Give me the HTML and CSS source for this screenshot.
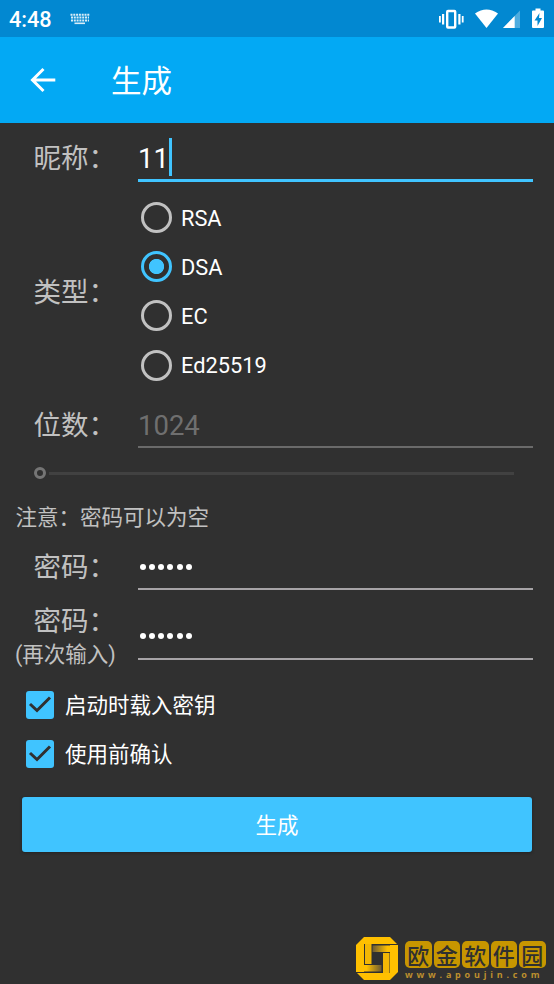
FILE: index.html
```html
<!DOCTYPE html>
<html lang="zh-CN">
<head>
<meta charset="utf-8">
<title>生成</title>
<link rel="stylesheet" href="styles.css">
</head>
<body>
<header class="status">
  <span class="clock">4:48</span>
  <svg class="keyboard" width="20" height="12" viewBox="0 0 20 12">
    <path d="M.5 1.800h19M1 4.600h18M1 7.400h18" stroke="#d9edf8" stroke-width="2" stroke-dasharray="2 .8" fill="none"/>
    <path d="M4.500 10.300h10.500" stroke="#d9edf8" stroke-width="1.600"/>
  </svg>
  <svg class="system" width="110" height="24" viewBox="0 0 110 24" fill="#fff">
    <rect x="10.200" y="4" width="8" height="16.500" rx=".8" fill="none" stroke="#fff" stroke-width="2.400"/>
    <path d="M2 9h1.800v6.500H2zM5 7h2.200v10.500H5zM21.300 7h2.200v10.500h-2.200zM24.800 9h1.800v6.500h-1.800z"/>
    <path d="M38 6.500Q49.500-1.500 61 6.500L49.500 21z"/>
    <path d="M66 21L83 3.500V21z" opacity=".3"/><path d="M66 21L77.700 9v12z"/>
    <path d="M96 3.500h2.500v-2h5v2h2.500q1 0 1 1V20q0 1-1 1H96q-1 0-1-1V4.500q0-1 1-1z"/>
    <path d="M102.500 6L97.500 13.500h3V19l4.500-8h-3z" fill="#0288d1"/>
  </svg>
</header>
<div class="appbar">
  <svg class="back" width="26" height="26" viewBox="0 0 26 26" fill="none" stroke="#fff" stroke-width="3"><path d="M25.300 13H3M13.500 2L2.500 13l11 11"/></svg>
  <h1>生成</h1>
</div>
<main>
  <div class="row nickname"><span class="label">昵称：</span><div class="field active"><span>11</span><i class="cursor"></i></div></div>
  <div class="row type"><span class="label">类型：</span>
    <div class="radios">
      <div class="radio"><i></i><span>RSA</span></div>
      <div class="radio on"><i></i><span>DSA</span></div>
      <div class="radio"><i></i><span>EC</span></div>
      <div class="radio"><i></i><span>Ed25519</span></div>
    </div>
  </div>
  <div class="row bits"><span class="label">位数：</span><div class="field disabled"><span>1024</span></div></div>
  <div class="slider"><i class="thumb"></i><i class="track"></i></div>
  <p class="note">注意：密码可以为空</p>
  <div class="row password"><span class="label">密码：</span><div class="field dots"><i></i><i></i><i></i><i></i><i></i><i></i></div></div>
  <div class="row repeat"><div class="labels"><span class="label">密码：</span><span class="hint">(再次输入)</span></div><div class="field dots"><i></i><i></i><i></i><i></i><i></i><i></i></div></div>
  <div class="check"><svg width="28" height="28" viewBox="0 0 28 28"><rect width="28" height="28" rx="3" fill="#40c4ff"/><path d="M4 13l7 6.500L24 6.500" fill="none" stroke="#303030" stroke-width="3"/></svg><span>启动时载入密钥</span></div>
  <div class="check"><svg width="28" height="28" viewBox="0 0 28 28"><rect width="28" height="28" rx="3" fill="#40c4ff"/><path d="M4 13l7 6.500L24 6.500" fill="none" stroke="#303030" stroke-width="3"/></svg><span>使用前确认</span></div>
  <button>生成</button>
</main>
<aside class="brand">
  <svg width="43" height="43" viewBox="0 0 43 43">
    <defs>
      <linearGradient id="fadeLeft"><stop offset="0" stop-color="#6b5a35"/><stop offset=".8" stop-color="#ffc000"/></linearGradient>
      <linearGradient id="fadeRight"><stop offset=".2" stop-color="#ffc000"/><stop offset="1" stop-color="#6b5a35"/></linearGradient>
    </defs>
    <path d="M8 0h26l8 8v27l-8 8H8l-8-8V8z" fill="#ffc000"/>
    <path d="M8 7h26v29H8z" fill="#303030"/>
    <path d="M9 7h6.500v20H9zM27 16h6.500v20H27z" fill="#f3b705"/>
    <path d="M16.500 8.500H35v6.500H16.500z" fill="url(#fadeLeft)"/>
    <path d="M7 28h18.500v6.500H7z" fill="url(#fadeRight)"/>
    <path d="M34 7.500h8M0 35.500h8" stroke="#303030" fill="none"/>
  </svg>
  <div class="brand-text"><div class="tiles"><b>欧</b><b>金</b><b>软</b><b>件</b><b>园</b></div><span>www.apoujin.com</span></div>
</aside>
</body>
</html>
```
FILE: styles.css
```css
* { box-sizing: border-box; }
body { margin: 0; width: 554px; height: 984px; overflow: hidden; position: relative; background: #303030; color: #fff; font-family: Roboto, "Noto Sans CJK SC", sans-serif; }
i { display: block; flex: none; }
svg { display: block; flex: none; }
.status { height: 37px; background: #0288d1; display: flex; align-items: center; padding: 0 8px 0 9px; }
.clock { width: 61px; font-size: 21.700px; font-weight: 500; line-height: 34px; padding-top: 3px; }
.keyboard { margin-top: 1px; }
.system { margin-left: auto; margin-right: -1px; }
.appbar { height: 86px; background: #03a9f4; display: flex; align-items: center; padding-left: 30px; }
h1 { margin: 0 0 0 55px; font-size: 30.500px; font-weight: 400; line-height: 44px; padding-top: 3px; }
.row { display: grid; grid-template-columns: 138px 395px; }
.label { font-size: 27.500px; line-height: 40px; padding-left: 33.500px; color: #c1c1c1; white-space: nowrap; align-self: center; }
.field { border-bottom: 2px solid #a6a3a6; font-size: 27.500px; display: flex; align-items: center; }
.nickname { height: 70px; padding-bottom: 11px; }
.nickname .label { padding-top: 12px; }
.active { border-bottom: 3px solid #40c4ff; padding-top: 12px; }
.cursor { width: 3px; height: 38px; background: #40c4ff; }
.active span { padding-top: 2px; }
.type { height: 197px; }
.type .label { padding-top: 2px; }
.radios { display: grid; grid-template-rows: repeat(4, 49.200px); }
.radio { display: flex; align-items: center; gap: 9px; padding-left: 3px; font-size: 21.800px; }
.radio i { width: 31px; height: 31px; border: 3px solid #c1c1c1; border-radius: 50%; }
.radio span { padding-top: 1px; }
.radio.on i { border-color: #40c4ff; background: radial-gradient(circle, #40c4ff 7.200px, transparent 8px); }
.bits { height: 58px; }
.bits .label { padding-top: 13px; }
.disabled { color: #6f6f6f; border-color: #6a6a6a; padding-top: 14px; }
.slider { height: 50px; padding-left: 34px; display: flex; align-items: center; gap: 3px; }
.thumb { width: 12px; height: 12px; border: 3px solid #757575; border-radius: 50%; }
.track { width: 465px; height: 3px; background: #414141; }
.note { margin: 0; height: 40px; line-height: 40px; padding-left: 15.500px; font-size: 21.500px; color: #c1c1c1; }
.password { height: 52px; }
.password .label { padding-top: 7px; }
.dots { gap: 3.300px; padding-left: 1.500px; padding-top: 7px; }
.dots i { width: 6px; height: 6px; border-radius: 50%; background: #fff; }
.repeat { height: 79px; }
.labels { display: flex; flex-direction: column; padding-top: 12px; }
.labels .label { align-self: flex-start; }
.hint { padding-left: 15px; font-size: 21.500px; line-height: 26px; color: #c1c1c1; }
.repeat .dots { height: 70px; padding-top: 24px; }
.check { height: 49px; display: flex; align-items: center; gap: 11px; padding-left: 26px; font-size: 21.500px; }
.check span { padding-bottom: 2px; }
.repeat + .check { margin-top: 11px; }
button { display: block; margin: 19px 0 0 22px; width: 510px; height: 55px; padding: 0 0 2px; border: 0; border-radius: 3px; background: #40c4ff; color: #fff; font: 21.500px Roboto, "Noto Sans CJK SC", sans-serif; box-shadow: 0 1px 3px #222; }
.brand { position: absolute; left: 356px; top: 937px; display: flex; gap: 6px; }
.brand-text { display: flex; flex-direction: column; padding-top: 4px; }
.tiles { display: flex; gap: 2px; }
.tiles b { width: 26.500px; height: 27px; border-radius: 5px; background: #c79600; color: #303030; font: 500 22px/26px "Noto Sans CJK SC", sans-serif; text-align: center; }
.brand-text span { font: 700 9px/13px "Open Sans", sans-serif; letter-spacing: 3.800px; color: #bd8f2e; white-space: nowrap; }
```
